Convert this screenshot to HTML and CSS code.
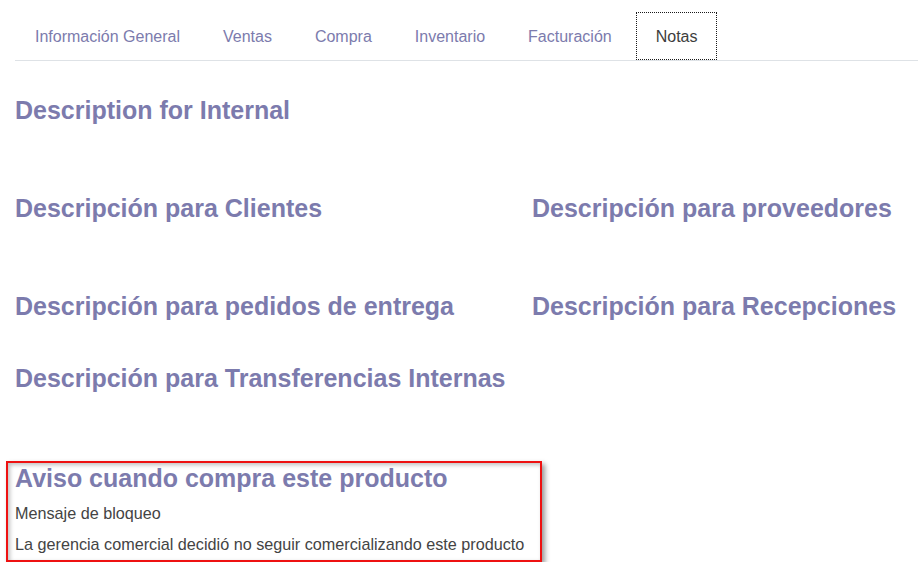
FILE: index.html
```html
<!DOCTYPE html>
<html lang="es">
<head>
<meta charset="utf-8">
<title>Notas</title>
<link rel="stylesheet" href="styles.css">
</head>
<body>
<div class="sheet">
  <ul class="tabs">
    <li class="tab">Información General</li>
    <li class="tab">Ventas</li>
    <li class="tab">Compra</li>
    <li class="tab">Inventario</li>
    <li class="tab">Facturación</li>
    <li class="tab active">Notas</li>
  </ul>

  <div class="pane">
    <section class="group gap-lg">
      <h2 class="group-title">Description for Internal</h2>
    </section>

    <div class="row gap-lg">
      <section class="group"><h2 class="group-title">Descripción para Clientes</h2></section>
      <section class="group"><h2 class="group-title">Descripción para proveedores</h2></section>
    </div>

    <div class="row gap-sm">
      <section class="group"><h2 class="group-title">Descripción para pedidos de entrega</h2></section>
      <section class="group"><h2 class="group-title">Descripción para Recepciones</h2></section>
    </div>

    <section class="group gap-lg">
      <h2 class="group-title">Descripción para Transferencias Internas</h2>
    </section>

    <section class="warning">
      <h2 class="group-title">Aviso cuando compra este producto</h2>
      <p class="line first">Mensaje de bloqueo</p>
      <p class="line">La gerencia comercial decidió no seguir comercializando este producto</p>
    </section>
  </div>
</div>
</body>
</html>
```

FILE: styles.css
```css
* { box-sizing: border-box; }

html, body {
  margin: 0;
  padding: 0;
  background: #ffffff;
}

body {
  font-family: "Liberation Sans", Arial, sans-serif;
  color: #4c4c4c;
}

.sheet {
  padding: 12px 0 0 15px;
}

.tabs {
  list-style: none;
  margin: 0;
  padding: 0;
  display: flex;
  gap: 3px;
  border-bottom: 1px solid #dee2e6;
}

.tab {
  height: 48px;
  line-height: 47px;
  padding: 0 19px;
  border: 1px solid transparent;
  font-size: 16px;
  color: #7c7bad;
  white-space: nowrap;
}

.tab.active {
  border: 1px dotted #1a1a1a;
  color: #3d3d3d;
  margin-left: 1px;
}

.pane {
  padding-top: 34px;
}

.group-title {
  margin: 0;
  font-size: 25px;
  line-height: 30px;
  font-weight: bold;
  color: #7c7bad;
  white-space: nowrap;
}

.row {
  display: grid;
  grid-template-columns: 517px 1fr;
}

.gap-lg { margin-bottom: 68px; }
.gap-sm { margin-bottom: 42px; }

.warning {
  display: inline-block;
  margin-left: -9px;
  padding: 0 16px 0 7px;
  border: 2px solid #ee1111;
  box-shadow: 3px 3px 5px rgba(0, 0, 0, 0.4), inset 2px 2px 4px rgba(0, 0, 0, 0.25);
}

.line {
  margin: 0;
  font-size: 16.2px;
  line-height: 31px;
  color: #444444;
  white-space: nowrap;
}

.line.first {
  margin-top: 5px;
}
```
